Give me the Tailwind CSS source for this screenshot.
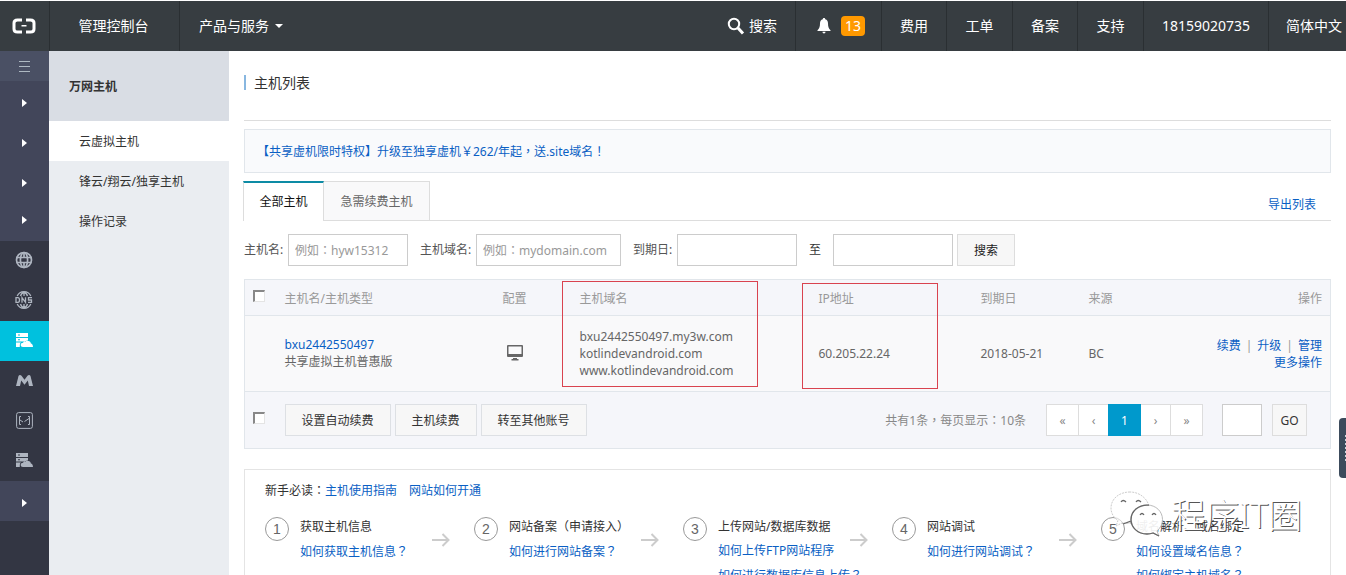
<!DOCTYPE html>
<html lang="zh-CN">
<head>
<meta charset="utf-8">
<title>管理控制台 - 主机列表</title>
<script src="https://cdn.jsdelivr.net/npm/@tailwindcss/browser@4"></script>
</head>
<body class="h-screen overflow-hidden flex flex-col bg-white pt-px font-['Noto_Sans','Noto_Sans_CJK_SC',sans-serif] text-xs text-[#333]">

<svg class="hidden" aria-hidden="true">
  <symbol id="host" viewBox="0 0 17 16">
    <path fill="currentColor" fill-rule="evenodd" d="M0 1h12v4H0zM2 2.500h2v1H2zM0 6h12v2.500c-1 0-2 .4-2.600 1H0zM2 7.200h2v1H2zM0 10.500h5c-.8.600-1.200 1.500-1.200 2.500v2H0zM7 15c-1.500 0-2.300-.8-2.300-2 0-1.300 1-2.200 2.300-2.200C7.600 9.600 8.800 9 10.200 9h2.300c1.300.3 2.200 1.200 2.400 2.500 1.200.2 2 1 2.100 3.500z"/>
  </symbol>
  <symbol id="caret" viewBox="0 0 5 8"><path fill="#fff" d="M0 0l5 4-5 4z"/></symbol>
  <symbol id="arrow" viewBox="0 0 18 14"><path fill="none" stroke="#ccc" stroke-width="2" d="M0 7h16M10.500 1l6 6-6 6"/></symbol>
</svg>

<header class="h-[50px] shrink-0 flex bg-[#373d41] text-white text-sm">
  <a href="#" aria-label="首页" class="w-[49px] pr-px flex items-center justify-center">
    <svg width="24" height="16" viewBox="0 0 24 16"><path fill="none" stroke="#fff" stroke-width="3" d="M10 2H5.500Q2 2 2 5v6q0 3 3.500 3H10M14 2h4.500Q22 2 22 5v6q0 3-3.500 3H14"/><path fill="#fff" d="M9.500 7h5v1.500h-5z"/></svg>
  </a>
  <a href="#" class="w-[131px] border-x border-[#2a2f32] flex items-center justify-center pr-0.5">管理控制台</a>
  <button class="pl-[19px] flex items-center gap-1.5">产品与服务
    <svg width="8" height="4" viewBox="0 0 8 4"><path fill="#fff" d="M0 0h8L4 4z"/></svg>
  </button>
  <nav class="ml-auto flex">
    <button class="px-[18px] flex items-center gap-1">
      <svg width="18" height="18" viewBox="0 0 18 18" fill="none" stroke="#fff"><circle cx="7" cy="7" r="5.200" stroke-width="2"/><path stroke-width="3" d="M11 11l5 5.500"/></svg>搜索
    </button>
    <a href="#" class="w-[86px] border-l border-[#2a2f32] flex items-center pl-[21px] gap-2.5">
      <svg width="14" height="16" viewBox="0 0 14 16" fill="#fff"><path d="M7 0c.8 0 1.200.5 1.200 1.200 2 .5 2.800 2.200 2.800 4.300 0 3.500.8 5 2.500 6.700V13H.5v-.8C2.200 10.500 3 9 3 5.500c0-2.100.8-3.800 2.800-4.300C5.800.5 6.200 0 7 0zM5.500 13.800h3c0 1-.6 1.700-1.500 1.700s-1.500-.7-1.500-1.700z"/></svg>
      <span class="w-6 h-5 rounded bg-[#ff9900] flex items-center justify-center">13</span>
    </a>
    <a href="#" class="w-[65px] border-l border-[#2a2f32] flex items-center justify-center">费用</a>
    <a href="#" class="w-[66px] border-l border-[#2a2f32] flex items-center justify-center">工单</a>
    <a href="#" class="w-[65px] border-l border-[#2a2f32] flex items-center justify-center">备案</a>
    <a href="#" class="w-[66px] border-l border-[#2a2f32] flex items-center justify-center">支持</a>
    <a href="#" class="w-[125px] border-l border-[#2a2f32] flex items-center justify-center">18159020735</a>
    <button class="w-[78px] border-l border-[#2a2f32] flex items-center pl-[17px] whitespace-nowrap">简体中文</button>
  </nav>
</header>

<div class="flex-1 min-h-0 flex">
  <aside class="w-[49px] shrink-0 bg-[#333643] text-[#aeb5c0] flex flex-col">
    <button aria-label="收起菜单" class="h-[30px] pr-px bg-[#4a5064] flex items-center justify-center">
      <svg width="11" height="11" viewBox="0 0 11 11"><path stroke="#aeb9c2" d="M0 .5h11M0 5.500h11M0 10.500h11"/></svg>
    </button>
    <div class="h-40 bg-[#42465a] flex flex-col">
      <button aria-label="展开" class="h-[43px] flex items-center justify-center"><svg class="w-[5px] h-2"><use href="#caret"/></svg></button>
      <button aria-label="展开" class="h-[37px] flex items-center justify-center"><svg class="w-[5px] h-2"><use href="#caret"/></svg></button>
      <button aria-label="展开" class="h-[43px] flex items-center justify-center"><svg class="w-[5px] h-2"><use href="#caret"/></svg></button>
      <button aria-label="展开" class="h-[31px] flex items-center justify-center"><svg class="w-[5px] h-2"><use href="#caret"/></svg></button>
    </div>
    <a href="#" aria-label="域名" class="h-10 pr-px pb-0.5 flex items-center justify-center">
      <svg width="18" height="18" viewBox="0 0 18 18" fill="none" stroke="currentColor" stroke-width="1.700"><circle cx="9" cy="9" r="7.500"/><ellipse cx="9" cy="9" rx="3.600" ry="7.500"/><path d="M1.500 6.500h15M1.500 11.500h15M9 1.500v5M9 11.500v5"/></svg>
    </a>
    <a href="#" aria-label="DNS" class="h-10 pr-px pb-0.5 flex items-center justify-center">
      <svg width="18" height="18" viewBox="0 0 18 18" fill="none" stroke="currentColor" stroke-width="1.300"><path d="M2.200 5A7.500 7.500 0 0 1 15.800 5M2.200 13A7.500 7.500 0 0 0 15.800 13M5.500 5q.8-3 3.500-3.500Q11.700 2 12.500 5M5.500 13q.8 3 3.500 3.500 2.700-.5 3.500-3.500M9 1.500V5M9 13v3.500"/><path d="M1 6.700h2q1.500 0 1.500 2.300T3 11.300H1zM7 11.800V6.700l3.500 4.600V6.200M17 6.700h-3.500V9H16.500v2.300H13"/></svg>
    </a>
    <a href="#" aria-label="云虚拟主机" class="h-10 pb-0.5 bg-[#00c1de] text-white flex items-center justify-center"><svg class="w-[17px] h-4"><use href="#host"/></svg></a>
    <a href="#" aria-label="邮箱" class="h-10 pb-0.5 flex items-center justify-center">
      <svg width="17" height="11" viewBox="0 0 17 11" fill="currentColor"><path d="M0 11L2.500 1Q3 0 4 0q.8 0 1.500.8l3 4 3-4Q12.200 0 13 0q1 0 1.500 1L17 11h-4L11.800 5.500 8.500 9.800 5.200 5.500 4 11z"/></svg>
    </a>
    <a href="#" aria-label="企业邮箱" class="h-10 pb-0.5 flex items-center justify-center">
      <svg width="17" height="17" viewBox="0 0 17 17" fill="none" stroke="currentColor"><rect x=".6" y=".6" width="15.800" height="15.800" rx="2"/><path d="M5 4.500H3.500v1.500M3.500 11v1.500H5M12 4.500h1.500v8H12M3.500 5.500v6M4 8l3 2M8.500 9.500L13 6.500"/></svg>
    </a>
    <a href="#" aria-label="主机" class="h-10 pb-0.5 flex items-center justify-center"><svg class="w-[17px] h-4"><use href="#host"/></svg></a>
    <button aria-label="展开" class="h-10 pt-[3px] bg-[#42465a] flex items-center justify-center"><svg class="w-[5px] h-2"><use href="#caret"/></svg></button>
  </aside>

  <nav class="w-[180px] shrink-0 bg-[#eaedf1]">
    <h2 class="h-[70px] pl-5 pt-0.5 bg-[#d9dde4] flex items-center font-bold">万网主机</h2>
    <a href="#" class="h-10 pl-[30px] pt-0.5 bg-white flex items-center">云虚拟主机</a>
    <a href="#" class="h-10 pl-[30px] pt-0.5 flex items-center">锋云/翔云/独享主机</a>
    <a href="#" class="h-10 pl-[30px] pt-0.5 flex items-center">操作记录</a>
  </nav>

  <main class="flex-1 min-w-0 pl-[15px] pr-[15px]">
    <div class="h-[70px] border-b border-[#ddd] pt-6">
      <h1 class="h-[15px] border-l-2 border-[#88b7e0] pl-2 text-sm leading-4">主机列表</h1>
    </div>
    <div class="mt-2 h-11 border border-[#e1e6eb] bg-[#f9fafc] flex items-center pl-3">
      <a href="#" class="text-[#0a5fc4]">【共享虚机限时特权】升级至独享虚机￥262/年起<span lang="zh-Hant" class="font-['Noto_Sans_CJK_TC']">，</span>送.site域名<span lang="zh-Hant" class="font-['Noto_Sans_CJK_TC']">！</span></a>
    </div>
    <div class="mt-2 h-10 flex border-b border-[#ddd]">
      <button class="-ml-px -mb-px w-[81px] border-x border-t-2 border-x-[#ddd] border-t-[#0d8ba5] bg-white text-[#111]">全部主机</button>
      <button class="w-[106px] pt-0.5 border-t border-r border-[#ddd] bg-[#f9f9fa] text-[#666]">急需续费主机</button>
      <a href="#" class="ml-auto mr-[15px] self-center pt-2 text-[#0a5fc4]">导出列表</a>
    </div>
    <form class="mt-[13px] h-8 flex items-center text-[#555]">
      <label for="host-name" class="w-11">主机名:</label>
      <input id="host-name" lang="zh-Hant" placeholder="例如：hyw15312" class="w-[120px] h-8 border border-[#ccc] px-1.5 font-['Noto_Sans','Noto_Sans_CJK_TC',sans-serif] placeholder:text-[#999]">
      <label for="domain" class="ml-3 w-14">主机域名:</label>
      <input id="domain" lang="zh-Hant" placeholder="例如：mydomain.com" class="w-[145px] h-8 border border-[#ccc] px-1.5 font-['Noto_Sans','Noto_Sans_CJK_TC',sans-serif] placeholder:text-[#999]">
      <label for="from" class="ml-3 w-11">到期日:</label>
      <input id="from" class="w-[120px] h-8 border border-[#ccc] px-1.5">
      <label for="to" class="w-9 text-center text-[#333]">至</label>
      <input id="to" class="w-[120px] h-8 border border-[#ccc] px-1.5">
      <button type="button" class="ml-1 w-[58px] h-8 pt-0.5 border border-[#ddd] bg-[#f7f7f7] text-[#222]">搜索</button>
    </form>

    <table class="mt-[13px] w-full table-fixed border border-[#e1e6eb] text-left text-[#666]">
      <colgroup><col class="w-10"><col class="w-[218px]"><col class="w-[77px]"><col class="w-[239px]"><col class="w-[162px]"><col class="w-[108px]"><col></colgroup>
      <thead class="bg-[#f5f6fa] text-[#999]">
        <tr class="h-9 border-b border-[#e1e6eb]">
          <th class="pl-2 pb-1"><input type="checkbox" aria-label="全选" class="block appearance-none size-3 bg-white border-t-2 border-l-2 border-t-[#888] border-l-[#888] border-r border-b border-r-[#e4e4e4] border-b-[#e4e4e4]"></th>
          <th class="pt-0.5 font-normal">主机名/主机类型</th>
          <th class="pt-0.5 font-normal">配置</th>
          <th class="pt-0.5 font-normal relative">主机域名
            <span class="absolute -left-[18px] top-px w-[196px] h-[106px] border border-[#d9434f]"></span></th>
          <th class="pt-0.5 font-normal relative">IP地址
            <span class="absolute -left-[17px] top-[3px] w-[136px] h-[106px] border border-[#d9434f]"></span></th>
          <th class="pt-0.5 font-normal">到期日</th>
          <th class="pt-0.5 font-normal"><div class="flex justify-between pr-2"><span>来源</span><span>操作</span></div></th>
        </tr>
      </thead>
      <tbody class="bg-[#f9f9fa]">
        <tr class="h-[76px] border-b border-[#e1e6eb] leading-[17px]">
          <td></td>
          <td class="pb-0.5"><a href="#" class="text-[#0a5fc4]">bxu2442550497</a><br>共享虚拟主机普惠版</td>
          <td class="pb-0.5"><svg class="ml-1" width="16" height="16" viewBox="0 0 16 16"><path fill="#666" fill-rule="evenodd" d="M1 0h14q1 0 1 1v10q0 1-1 1H1q-1 0-1-1V1q0-1 1-1zM1.500 1.500v7.500h13V1.500zM6 13h4v1h1.500v1.500h-7V14H6z"/></svg></td>
          <td>bxu2442550497.my3w.com<br>kotlindevandroid.com<br>www.kotlindevandroid.com</td>
          <td>60.205.22.24</td>
          <td>2018-05-21</td>
          <td><div class="flex justify-between items-center pr-2"><span>BC</span>
            <span class="text-right text-[#0a5fc4]"><a href="#">续费</a><span class="mx-[5px] text-[#999]">|</span><a href="#">升级</a><span class="mx-[5px] text-[#999]">|</span><a href="#">管理</a><br><a href="#">更多操作</a></span></div></td>
        </tr>
      </tbody>
      <tfoot class="bg-[#f5f6fa]">
        <tr class="h-[57px]">
          <td class="pl-2 pb-1"><input type="checkbox" aria-label="全选" class="block appearance-none size-3 bg-white border-t-2 border-l-2 border-t-[#888] border-l-[#888] border-r border-b border-r-[#e4e4e4] border-b-[#e4e4e4]"></td>
          <td colspan="6">
            <div class="flex items-center pr-[23px] text-[#333]">
              <button class="h-8 px-4 pt-0.5 border border-[#dde0e4] bg-[#f7f7f7]">设置自动续费</button>
              <button class="ml-1 h-8 px-4 pt-0.5 border border-[#dde0e4] bg-[#f7f7f7]">主机续费</button>
              <button class="ml-1 h-8 px-4 pt-0.5 border border-[#dde0e4] bg-[#f7f7f7]">转至其他账号</button>
              <span class="ml-auto mr-5 text-[#888]">共有1条<span lang="zh-Hant" class="font-['Noto_Sans_CJK_TC']">，</span>每页显示<span lang="zh-Hant" class="font-['Noto_Sans_CJK_TC']">：</span>10条</span>
              <div class="flex h-8 border border-[#ddd] bg-white text-[#888]">
                <button class="w-8 pt-0.5 border-r border-[#ddd]">«</button>
                <button class="w-[29px] pt-0.5">‹</button>
                <button class="-my-px w-[33px] pt-0.5 bg-[#0099cc] text-white">1</button>
                <button class="w-[30px] pt-0.5 border-r border-[#ddd]">›</button>
                <button class="w-[31px] pt-0.5">»</button>
              </div>
              <input aria-label="页码" class="ml-[19px] w-10 h-8 border border-[#ccc] bg-white px-1">
              <button class="ml-2.5 w-[35px] h-8 pt-0.5 border border-[#ddd] bg-[#f7f7f7]">GO</button>
            </div>
          </td>
        </tr>
      </tfoot>
    </table>

    <section class="relative mt-5 h-48 border border-[#e4e4e4] px-5 pt-2.5">
      <p class="h-5 leading-5">新手必读<span lang="zh-Hant" class="font-['Noto_Sans_CJK_TC']">：</span><a href="#" class="text-[#0a5fc4]">主机使用指南</a><a href="#" class="ml-3 text-[#0a5fc4]">网站如何开通</a></p>
      <ol class="mt-[15px] grid grid-cols-5 leading-6">
        <li class="flex">
          <span class="mt-0.5 mr-[11px] size-6 shrink-0 rounded-full border border-[#999] flex items-center justify-center font-['Liberation_Sans'] text-sm text-[#666]">1</span>
          <div><p class="h-6">获取主机信息</p><p class="h-6"><a href="#" class="text-[#0a5fc4]">如何获取主机信息<span lang="zh-Hant" class="font-['Noto_Sans_CJK_TC']">？</span></a></p></div>
          <svg class="ml-auto mr-6 mt-[18px] w-[18px] h-3.5 shrink-0"><use href="#arrow"/></svg>
        </li>
        <li class="flex">
          <span class="mt-0.5 mr-[11px] size-6 shrink-0 rounded-full border border-[#999] flex items-center justify-center font-['Liberation_Sans'] text-sm text-[#666]">2</span>
          <div><p class="h-6">网站备案（申请接入）</p><p class="h-6"><a href="#" class="text-[#0a5fc4]">如何进行网站备案<span lang="zh-Hant" class="font-['Noto_Sans_CJK_TC']">？</span></a></p></div>
          <svg class="ml-auto mr-6 mt-[18px] w-[18px] h-3.5 shrink-0"><use href="#arrow"/></svg>
        </li>
        <li class="flex">
          <span class="mt-0.5 mr-[11px] size-6 shrink-0 rounded-full border border-[#999] flex items-center justify-center font-['Liberation_Sans'] text-sm text-[#666]">3</span>
          <div class="-mr-8 whitespace-nowrap"><p class="h-6">上传网站/数据库数据</p><p class="h-6"><a href="#" class="text-[#0a5fc4]">如何上传FTP网站程序</a></p><p class="h-6"><a href="#" class="text-[#0a5fc4]">如何进行数据库信息上传<span lang="zh-Hant" class="font-['Noto_Sans_CJK_TC']">？</span></a></p></div>
          <svg class="ml-auto mr-6 mt-[18px] w-[18px] h-3.5 shrink-0"><use href="#arrow"/></svg>
        </li>
        <li class="flex">
          <span class="mt-0.5 mr-[11px] size-6 shrink-0 rounded-full border border-[#999] flex items-center justify-center font-['Liberation_Sans'] text-sm text-[#666]">4</span>
          <div><p class="h-6">网站调试</p><p class="h-6"><a href="#" class="text-[#0a5fc4]">如何进行网站调试<span lang="zh-Hant" class="font-['Noto_Sans_CJK_TC']">？</span></a></p></div>
          <svg class="ml-auto mr-6 mt-[18px] w-[18px] h-3.5 shrink-0"><use href="#arrow"/></svg>
        </li>
        <li class="flex">
          <span class="mt-0.5 mr-[11px] size-6 shrink-0 rounded-full border border-[#999] flex items-center justify-center font-['Liberation_Sans'] text-sm text-[#666]">5</span>
          <div><p class="h-6">域名解析、域名绑定</p><p class="h-6"><a href="#" class="text-[#0a5fc4]">如何设置域名信息<span lang="zh-Hant" class="font-['Noto_Sans_CJK_TC']">？</span></a></p><p class="h-6"><a href="#" class="text-[#0a5fc4]">如何绑定主机域名<span lang="zh-Hant" class="font-['Noto_Sans_CJK_TC']">？</span></a></p></div>
        </li>
      </ol>
      <div class="absolute right-7 top-5 flex items-center gap-2">
        <svg width="54" height="50" viewBox="0 0 54 50" fill="none">
          <path fill="#fff" fill-opacity=".6" stroke="#ccc" stroke-dasharray="2 1" d="M21 2C10 2 2 9 2 18c0 5 2.500 9.500 7 12.500L7 36l7-3.500q3 1.200 8 1C20 24 28 16 40 16 38 8 30 2 21 2z"/>
          <path stroke="#666" stroke-width="1.300" d="M14 34l7-2.500 3 1M12 12q2-3 5 0M27 12q2-3 5 0"/>
          <path fill="#fff" fill-opacity=".92" stroke="#bbb" d="M38 15c-9 0-16 6.500-16 14.500S29 44 38 44q3 0 6-1l6 3-2-5c3.500-3 5.500-7 5.500-11.500C53.500 21.500 47 15 38 15z"/>
          <path stroke="#666" stroke-width="1.300" d="M40 15.200c-10-1-18 6-18 14.300S29 44 38 44q3 0 6-1l6 3M31 25q2-3 4 0M43 25q2-3 4 0"/>
        </svg>
        <span class="text-[34px] leading-[48px] font-light text-white [text-shadow:1px_1px_0_#555]">程序IT圈</span>
      </div>
    </section>
  </main>
</div>

<button aria-label="咨询建议" class="fixed right-0 top-[418px] w-[7px] h-[60px] rounded-l-sm bg-[#3c4b5c] flex items-center justify-end">
  <svg width="1" height="26" viewBox="0 0 1 26"><path stroke="#cdd5dd" stroke-width="2" stroke-dasharray="2 2" d="M.5 0v26"/></svg>
</button>
</body>
</html>
